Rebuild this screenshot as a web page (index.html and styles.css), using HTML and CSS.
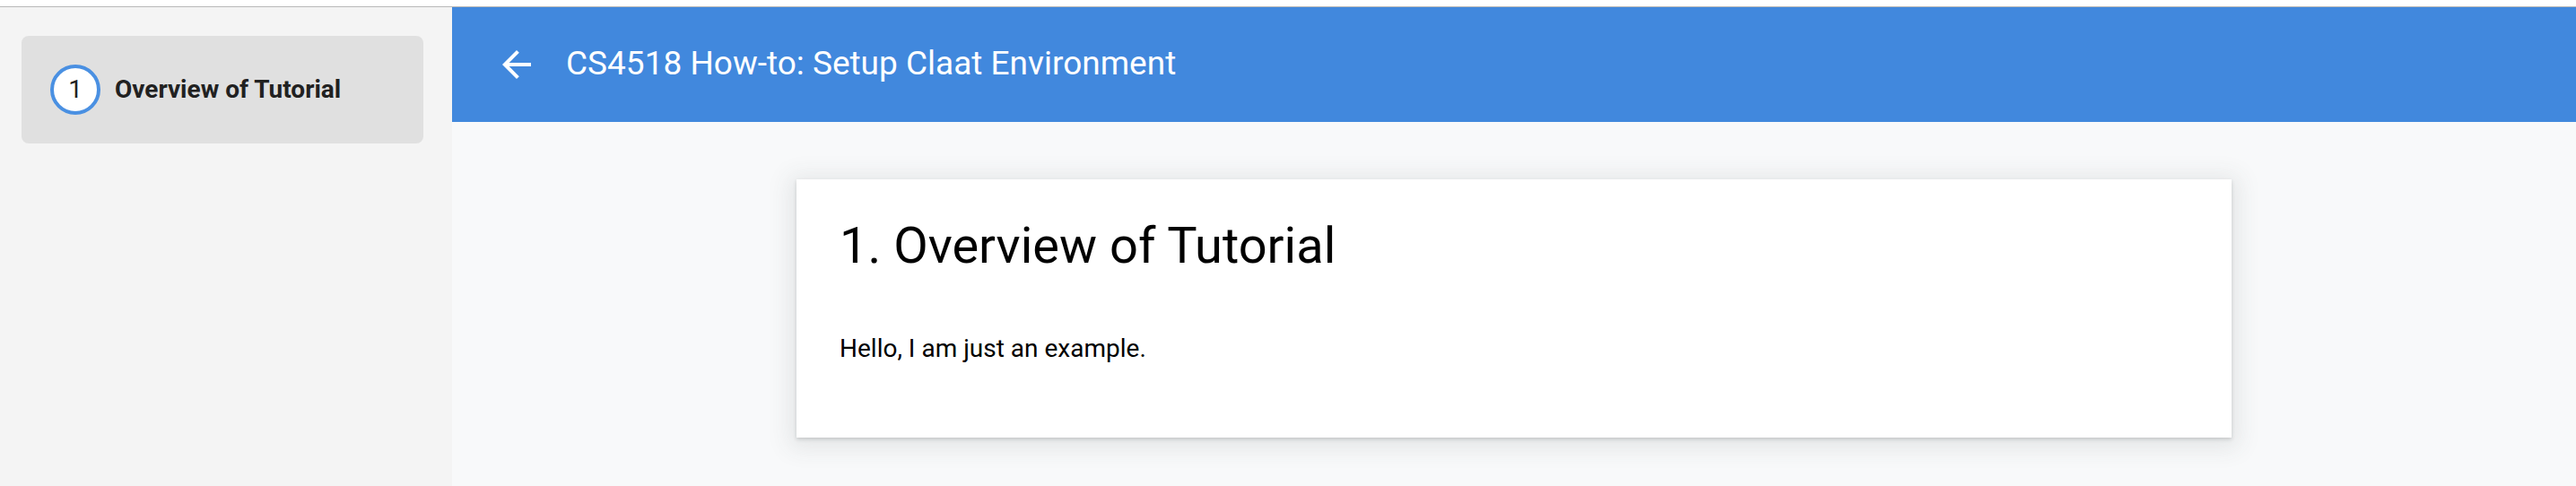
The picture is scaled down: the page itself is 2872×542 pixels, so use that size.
FILE: index.html
```html
<!DOCTYPE html>
<html lang="en">
<head>
<meta charset="utf-8">
<title>CS4518 How-to: Setup Claat Environment</title>
<link rel="stylesheet" href="styles.css">
</head>
<body>
<div class="topstrip"></div>
<div class="app">
  <nav class="sidebar">
    <div class="step active">
      <span class="step-num">1</span>
      <span class="step-label">Overview of Tutorial</span>
    </div>
  </nav>
  <div class="main">
    <header class="header">
      <span class="back">
        <svg viewBox="0 0 24 24" width="48" height="48"><path fill="#ffffff" d="M20 11H7.83l5.59-5.59L12 4l-8 8 8 8 1.41-1.41L7.83 13H20v-2z"/></svg>
      </span>
      <h1 class="title">CS4518 How-to: Setup Claat Environment</h1>
    </header>
    <div class="content">
      <section class="card">
        <h2 class="card-title">1. Overview of Tutorial</h2>
        <p class="card-text">Hello, I am just an example.</p>
      </section>
    </div>
  </div>
</div>
</body>
</html>
```

FILE: styles.css
```css
html, body {
  margin: 0;
  padding: 0;
  height: 100%;
  font-family: Roboto, "Noto Sans", Arial, sans-serif;
}

body {
  display: flex;
  flex-direction: column;
  background: #ffffff;
  overflow: hidden;
}

.topstrip {
  height: 7px;
  flex: none;
  background: #ffffff;
  border-bottom: 1px solid #b9b9b9;
}

.app {
  flex: 1;
  display: flex;
  min-height: 0;
}

.sidebar {
  width: 504px;
  flex: none;
  background: #f4f4f4;
  padding: 32px 32px 0 24px;
  box-sizing: border-box;
}

.step {
  display: flex;
  align-items: center;
  height: 120px;
  padding-left: 32px;
  border-radius: 8px;
  box-sizing: border-box;
}

.step.active {
  background: #e0e0e0;
}

.step-num {
  width: 56px;
  height: 56px;
  box-sizing: border-box;
  border: 4px solid #4a90e2;
  border-radius: 50%;
  background: #ffffff;
  display: flex;
  align-items: center;
  justify-content: center;
  font-size: 28px;
  line-height: 32px;
  color: #212121;
  flex: none;
}

.step-label {
  margin-left: 16px;
  font-size: 28px;
  line-height: 32px;
  font-weight: 700;
  color: #212121;
}

.main {
  flex: 1;
  display: flex;
  flex-direction: column;
  background: #f8f9fa;
  min-width: 0;
}

.header {
  height: 128px;
  flex: none;
  background: #4188dd;
  display: flex;
  align-items: center;
  padding-left: 48px;
}

.back {
  width: 48px;
  height: 48px;
  display: flex;
}

.title {
  margin: 0 0 3px 31px;
  font-size: 37px;
  line-height: 48px;
  font-weight: 400;
  color: #ffffff;
}

.content {
  display: flex;
  justify-content: center;
  padding-top: 64px;
}

.card {
  width: 1600px;
  box-sizing: border-box;
  background: #ffffff;
  padding: 42px 48px 75px;
  box-shadow: 0 2px 4px rgba(60, 64, 67, 0.2), 0 4px 24px 8px rgba(60, 64, 67, 0.1);
}

.card-title {
  margin: 0;
  font-size: 56px;
  line-height: 64px;
  font-weight: 400;
  color: #000000;
}

.card-text {
  margin: 59px 0 0;
  font-size: 28px;
  line-height: 48px;
  color: #000000;
}
```
